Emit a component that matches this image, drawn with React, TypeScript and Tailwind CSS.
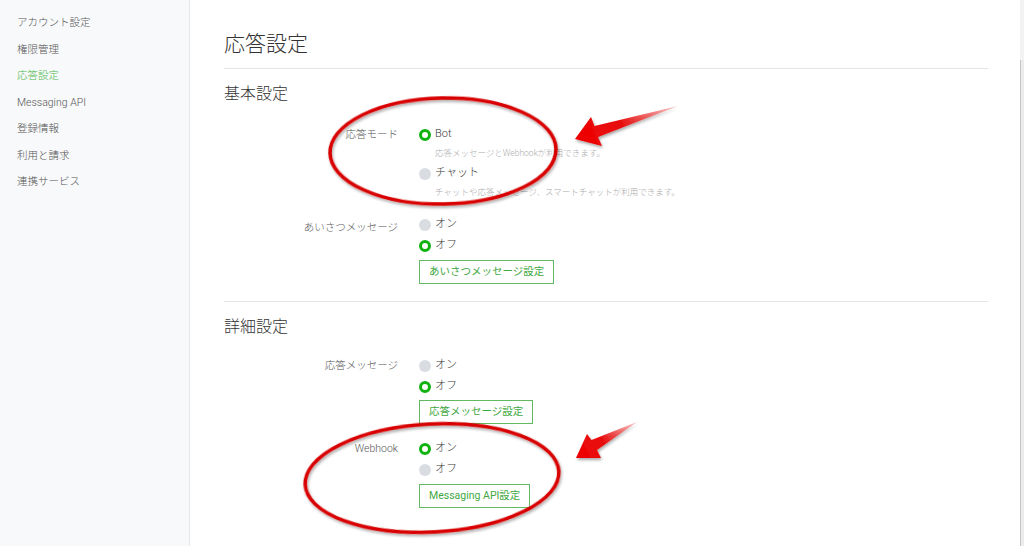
import React from 'react';

const font = { fontFamily: 'Roboto, "Noto Sans CJK JP", sans-serif' };

const menuItems = [
  { label: 'アカウント設定' },
  { label: '権限管理' },
  { label: '応答設定', active: true },
  { label: 'Messaging API' },
  { label: '登録情報' },
  { label: '利用と請求' },
  { label: '連携サービス' },
];

const Radio: React.FC<{ checked?: boolean; label: string; className?: string }> = ({ checked, label, className }) => (
  <div className={`flex h-[21px] items-center gap-[4px] ${className ?? ''}`}>
    {checked ? (
      <span className="box-border h-[12px] w-[12px] rounded-full border-[3.5px] border-[#0fb20f] bg-white" />
    ) : (
      <span className="h-[12px] w-[12px] rounded-full bg-[#d9dce1]" />
    )}
    <span className="text-[11px] font-light text-[#3a3a3a]">{label}</span>
  </div>
);

const Desc: React.FC<{ children: React.ReactNode }> = ({ children }) => (
  <div className="flex h-[17px] items-center pl-[16px] text-[8.5px] font-light text-[#aaa]">{children}</div>
);

const OutlineButton: React.FC<{ children: React.ReactNode; className?: string }> = ({ children, className }) => (
  <button className={`box-border h-[24px] border border-[#62b962] bg-white px-[9px] text-[10.5px] text-[#3fa83f] ${className ?? ''}`}>
    {children}
  </button>
);

const Row: React.FC<{ label: string; className?: string; labelClass?: string; children: React.ReactNode }> = ({
  label,
  className,
  labelClass,
  children,
}) => (
  <div className={`flex ${className ?? ''}`}>
    <div className={`w-[174px] text-right text-[10.5px] font-light leading-[21px] text-[#555] ${labelClass ?? ''}`}>{label}</div>
    <div className="ml-[21px] flex flex-col items-start">{children}</div>
  </div>
);

const Annotations = () => (
  <svg className="pointer-events-none absolute left-0 top-0" width={1024} height={546}>
    <defs>
      <filter id="soft" x="-20%" y="-20%" width="140%" height="140%">
        <feGaussianBlur in="SourceAlpha" stdDeviation="1.5" />
        <feOffset dx="1" dy="1.5" result="b" />
        <feComponentTransfer>
          <feFuncA type="linear" slope="0.35" />
        </feComponentTransfer>
        <feMerge>
          <feMergeNode />
          <feMergeNode in="SourceGraphic" />
        </feMerge>
      </filter>
      <linearGradient id="arrow1" x1="575" y1="138" x2="678" y2="106" gradientUnits="userSpaceOnUse">
        <stop offset="0" stopColor="#ee0000" />
        <stop offset="0.45" stopColor="#e81010" />
        <stop offset="1" stopColor="#f25a5a" stopOpacity="0.35" />
      </linearGradient>
      <linearGradient id="arrow2" x1="576" y1="457" x2="637" y2="422" gradientUnits="userSpaceOnUse">
        <stop offset="0" stopColor="#ee0000" />
        <stop offset="0.45" stopColor="#e81010" />
        <stop offset="1" stopColor="#f25a5a" stopOpacity="0.35" />
      </linearGradient>
    </defs>

    <ellipse
      cx={443}
      cy={151}
      rx={113}
      ry={53}
      transform="rotate(-1 443 151)"
      fill="none"
      stroke="#d80000"
      strokeWidth={3.5}
      filter="url(#soft)"
    />
    <ellipse
      cx={432}
      cy={478}
      rx={127}
      ry={54}
      transform="rotate(-3 432 478)"
      fill="none"
      stroke="#d80000"
      strokeWidth={3.5}
      filter="url(#soft)"
    />

    <polygon
      points="575,139 591,117 594.5,126 678,106 598,137 602,146"
      fill="url(#arrow1)"
      filter="url(#soft)"
    />
    <polygon
      points="576,458 587,434 591.5,440 637,422 597,450 601,458"
      fill="url(#arrow2)"
      filter="url(#soft)"
    />
  </svg>
);

export default function App() {
  return (
    <div className="relative flex h-[546px] w-[1024px] overflow-hidden bg-white" style={font}>
      {/* Sidebar */}
      <aside className="w-[190px] shrink-0 border-r border-[#e6e6e6] bg-[#f8f9fa] pt-[10px]">
        {menuItems.map((item) => (
          <div
            key={item.label}
            className={`h-[26.5px] pl-[17px] text-[10.5px] font-light leading-[26.5px] ${
              item.active ? 'text-[#4cb84c]' : 'text-[#555]'
            }`}
          >
            {item.label}
          </div>
        ))}
      </aside>

      {/* Main */}
      <main className="flex-1 pl-[34px] pr-[32px] pt-[30px]">
        <h1 className="text-[21px] font-light leading-[28px] text-[#333]">応答設定</h1>
        <div className="mt-[10px] border-t border-[#e5e5e5]" />

        <h2 className="mt-[14px] text-[16px] font-light leading-[22px] text-[#333]">基本設定</h2>

        <Row label="応答モード" className="mt-[19px]">
          <Radio checked label="Bot" />
          <Desc>応答メッセージとWebhookが利用できます。</Desc>
          <Radio label="チャット" className="mt-[1px]" />
          <Desc>チャットや応答メッセージ、スマートチャットが利用できます。</Desc>
        </Row>

        <Row label="あいさつメッセージ" className="mt-[13px]" labelClass="pt-[3px]">
          <Radio label="オン" />
          <Radio checked label="オフ" />
          <OutlineButton className="mt-[4px]">あいさつメッセージ設定</OutlineButton>
        </Row>

        <div className="mt-[17px] border-t border-[#e5e5e5]" />

        <h2 className="mt-[14px] text-[16px] font-light leading-[22px] text-[#333]">詳細設定</h2>

        <Row label="応答メッセージ" className="mt-[17px]">
          <Radio label="オン" />
          <Radio checked label="オフ" />
          <OutlineButton className="mt-[3px]">応答メッセージ設定</OutlineButton>
        </Row>

        <Row label="Webhook" className="mt-[14px]">
          <Radio checked label="オン" />
          <Radio label="オフ" />
          <OutlineButton className="mt-[4px]">Messaging API設定</OutlineButton>
        </Row>
      </main>

      {/* Scrollbar edge */}
      <div className="flex w-[4px] shrink-0 flex-col">
        <div className="h-[60px] bg-[#f3f3f3]" />
        <div className="flex-1 border-l border-[#c6c6c6] bg-[#ececec]" />
      </div>

      <Annotations />
    </div>
  );
}
